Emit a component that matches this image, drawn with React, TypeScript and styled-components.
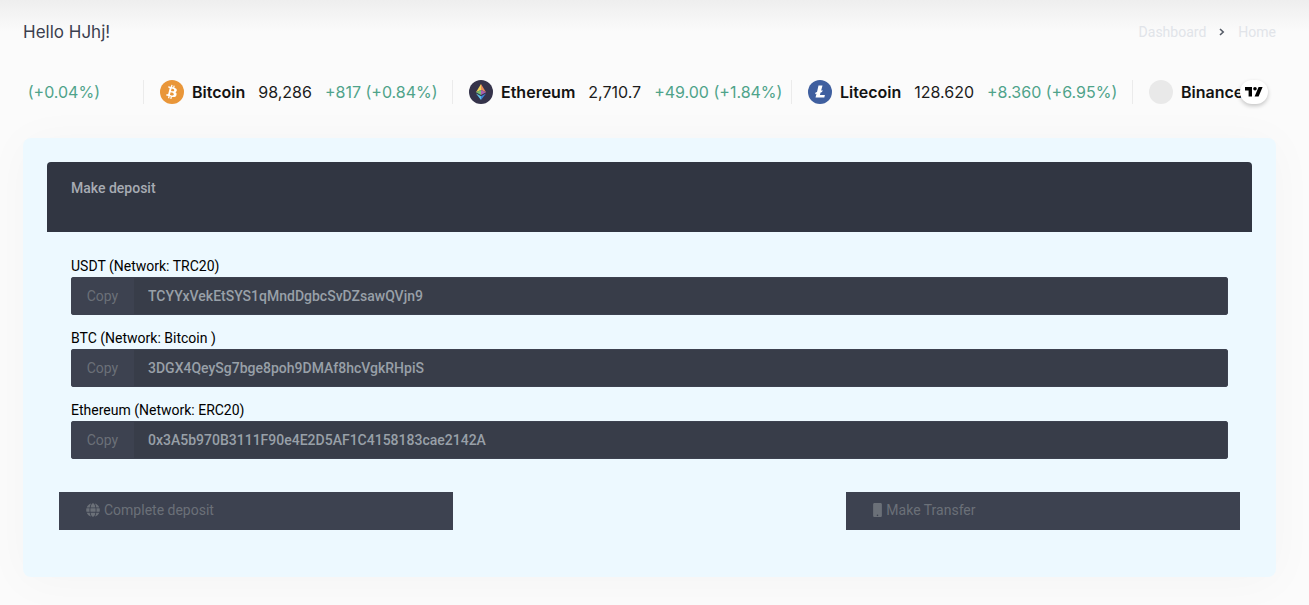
import React, { useId } from "react";
import styled, { createGlobalStyle } from "styled-components";
import { FaGlobe, FaMobile } from "react-icons/fa";

const GlobalStyle = createGlobalStyle`
  *, *::before, *::after { box-sizing: border-box; }
  body {
    margin: 0;
    min-height: 100vh;
    overflow-x: hidden;
    background: linear-gradient(#eee, #fbfbfb 32px) #fbfbfb no-repeat;
    font-family: Roboto, "Liberation Sans", sans-serif;
    font-size: 14px;
    line-height: 21px;
    color: #000;
  }
  button, input { font: inherit; margin: 0; }
`;

const Page = styled.main`
  padding: 20px 33px 28px 23px;
`;

const PageHeader = styled.header`
  display: flex;
  align-items: center;
  justify-content: space-between;
  height: 24px;
`;

const Greeting = styled.h1`
  margin: 0;
  font-family: Inter, sans-serif;
  font-size: 17px;
  line-height: 24px;
  font-weight: 400;
  color: #3b3f4f;
`;

const Breadcrumb = styled.nav`
  display: flex;
  align-items: center;
  gap: 13px;
  color: #555b66;
`;

const Crumb = styled.a`
  color: #e1e4e9;
  text-decoration: none;
`;

const TickerTape = styled.section`
  position: relative;
  margin: 36px 7px 34px 0;
`;

const TickerTrack = styled.div`
  display: flex;
  height: 24px;
  overflow: hidden;
  font-family: Inter, sans-serif;
  font-size: 16px;
  line-height: 24px;
  white-space: nowrap;
`;

const TickerItem = styled.div<{ $width: number; $clipped?: boolean }>`
  display: flex;
  flex: none;
  width: ${(p) => p.$width}px;
  padding-left: ${(p) => (p.$clipped ? 0 : 16)}px;
  padding-right: ${(p) => (p.$clipped ? 43 : 0)}px;
  justify-content: ${(p) => (p.$clipped ? "flex-end" : "flex-start")};
  border-right: 1px solid #ebebeb;
`;

const CoinIcon = styled.svg`
  flex: none;
  width: 24px;
  height: 24px;
  margin-right: 8px;
`;

const CoinName = styled.strong`
  margin-right: 13px;
  font-weight: 600;
  color: #131313;
`;

const CoinPrice = styled.span`
  margin-right: 13px;
  color: #1c1c1c;
`;

const CoinChange = styled.span`
  color: #4fa38a;
`;

const ProviderBadge = styled.a`
  position: absolute;
  top: 0;
  right: 1px;
  display: flex;
  align-items: center;
  justify-content: center;
  width: 28px;
  height: 24px;
  border-radius: 12px;
  background: #fff;
  color: #000;
  box-shadow: 0 2px 4px rgba(0, 0, 0, 0.22);
`;

const Card = styled.section`
  padding: 24px 24px 47px;
  border-radius: 8px;
  background: #edf9ff;
  box-shadow: 0 4px 48px rgba(0, 0, 0, 0.03);
`;

const CardHeader = styled.header`
  height: 70px;
  padding: 16px 24px;
  border-radius: 4px 4px 0 0;
  background: #313642;
`;

const CardTitle = styled.h2`
  margin: 0;
  font-size: 14px;
  line-height: 21px;
  font-weight: 500;
  color: #a7abb3;
`;

const Wallets = styled.div`
  display: grid;
  gap: 13px;
  padding: 24px 24px 33px;
`;

const Field = styled.div`
  display: flex;
  flex-direction: column;
`;

const FieldLabel = styled.label`
  height: 21px;
`;

const AddressGroup = styled.div`
  display: flex;
  height: 38px;
  overflow: hidden;
  border-radius: 3px;
  background: #383d49;
`;

const CopyButton = styled.button`
  flex: none;
  width: 63px;
  padding: 0;
  border: 0;
  background: #3d4250;
  color: #6b7078;
`;

const AddressInput = styled.input`
  flex: 1;
  min-width: 0;
  padding: 0 14px;
  border: 1px solid #3d4250;
  border-left: 0;
  border-radius: 0 3px 3px 0;
  background: #383d49;
  color: #98a0a8;
  font-weight: 500;
  outline: 0;
`;

const Actions = styled.div`
  display: grid;
  grid-template-columns: repeat(3, 1fr);
  padding: 0 12px;
`;

const ActionButton = styled.button<{ $last?: boolean }>`
  display: flex;
  align-items: center;
  gap: 4px;
  grid-column: ${(p) => (p.$last ? 3 : 1)};
  height: 38px;
  padding: 0 27px 2px;
  border: 0;
  background: #3d4250;
  color: #6b7078;
`;

const GlobeIcon = styled(FaGlobe)`
  width: 14px;
  height: 14px;
`;

const PhoneIcon = styled(FaMobile)`
  width: 9px;
  height: 14px;
`;

const Bitcoin = () => (
  <CoinIcon viewBox="0 0 24 24" aria-hidden="true">
    <circle cx="12" cy="12" r="12" fill="#e99639" />
    <path
      fill="#fff"
      d="M16.8 10.5c.2-1.5-.9-2.2-2.5-2.8l.5-2-1.2-.3-.5 2-1-.3.5-2-1.2-.3-.5 2-2.5-.6-.3 1.3.9.2c.5.1.6.4.6.7l-1.4 5.500c-.1.2-.2.4-.6.3l-.9-.2-.6 1.400 2.400.6-.5 2.100 1.200.3.500-2.100 1 .300-.5 2.100 1.200.300.500-2.100c2.200.400 3.800.200 4.500-1.700.5-1.600 0-2.500-1.200-3.100.9-.200 1.500-.700 1.600-1.600zm-3 4.100c-.4 1.600-3 .7-3.900.5l.7-2.800c.9.200 3.600.600 3.200 2.300zm.4-4.100c-.4 1.400-2.500.7-3.200.5l.6-2.500c.7.200 3 .5 2.600 2z"
    />
  </CoinIcon>
);

const Ethereum = () => (
  <CoinIcon viewBox="0 0 24 24" aria-hidden="true">
    <circle cx="12" cy="12" r="12" fill="#35334a" />
    <path fill="#f3d45b" d="M12 4 7 12.300l5-2.300z" />
    <path fill="#e58a5b" d="M12 4v6l5 2.300z" />
    <path fill="#75bf72" d="m7 12.300 5-2.300v5z" />
    <path fill="#a75fb0" d="M17 12.300 12 10v5z" />
    <path fill="#62c6ea" d="m7 13.500 5 2.800V20z" />
    <path fill="#4083d8" d="m17 13.500-5 2.800V20z" />
  </CoinIcon>
);

const Litecoin = () => (
  <CoinIcon viewBox="0 0 24 24" aria-hidden="true">
    <circle cx="12" cy="12" r="12" fill="#3f5f9f" />
    <path
      fill="#fff"
      d="M10.500 5.500h4l-1.400 5.200 1.500-.6-.5 1.800-1.500.6-.7 2.500h5l-.6 2.500H7.500l1-3.800-1.400.6.5-1.800 1.400-.6z"
    />
  </CoinIcon>
);

const Pending = () => (
  <CoinIcon viewBox="0 0 24 24" aria-hidden="true">
    <circle cx="12" cy="12" r="12" fill="#e9e9e9" />
  </CoinIcon>
);

const quotes = [
  { name: "Bitcoin", price: "98,286", change: "+817 (+0.84%)", width: 309, Icon: Bitcoin },
  { name: "Ethereum", price: "2,710.7", change: "+49.00 (+1.84%)", width: 339, Icon: Ethereum },
  { name: "Litecoin", price: "128.620", change: "+8.360 (+6.95%)", width: 341, Icon: Litecoin },
];

const wallets = [
  { label: "USDT (Network: TRC20)", address: "TCYYxVekEtSYS1qMndDgbcSvDZsawQVjn9" },
  { label: "BTC (Network: Bitcoin )", address: "3DGX4QeySg7bge8poh9DMAf8hcVgkRHpiS" },
  { label: "Ethereum (Network: ERC20)", address: "0x3A5b970B3111F90e4E2D5AF1C4158183cae2142A" },
];

function WalletField({ label, address }: { label: string; address: string }) {
  const id = useId();
  return (
    <Field>
      <FieldLabel htmlFor={id}>{label}</FieldLabel>
      <AddressGroup>
        <CopyButton type="button" onClick={() => navigator.clipboard?.writeText(address)}>
          Copy
        </CopyButton>
        <AddressInput id={id} type="text" readOnly value={address} />
      </AddressGroup>
    </Field>
  );
}

export default function App() {
  return (
    <>
      <GlobalStyle />
      <Page>
        <PageHeader>
          <Greeting>Hello HJhj!</Greeting>
          <Breadcrumb aria-label="Breadcrumb">
            <Crumb href="#dashboard">Dashboard</Crumb>
            <svg width="6" height="8" viewBox="0 0 6 8" fill="none" stroke="currentColor" strokeWidth="1.6" aria-hidden="true">
              <path d="m1 1 3.200 3L1 7" />
            </svg>
            <Crumb href="#home">Home</Crumb>
          </Breadcrumb>
        </PageHeader>

        <TickerTape aria-label="Market prices">
          <TickerTrack>
            <TickerItem $width={121} $clipped>
              <CoinChange>0 (+0.04%)</CoinChange>
            </TickerItem>
            {quotes.map(({ name, price, change, width, Icon }) => (
              <TickerItem key={name} $width={width}>
                <Icon />
                <CoinName>{name}</CoinName>
                <CoinPrice>{price}</CoinPrice>
                <CoinChange>{change}</CoinChange>
              </TickerItem>
            ))}
            <TickerItem $width={309}>
              <Pending />
              <CoinName>Binance</CoinName>
            </TickerItem>
          </TickerTrack>
          <ProviderBadge href="#tradingview" aria-label="TradingView">
            <svg width="18" height="10" viewBox="0 0 18 10" fill="currentColor" aria-hidden="true">
              <path d="M0 0h7v9.500H3.600V3.600H0zM13.600 0h4l-4 9.500H9.600z" />
              <circle cx="10" cy="1.800" r="1.800" />
            </svg>
          </ProviderBadge>
        </TickerTape>

        <Card>
          <CardHeader>
            <CardTitle>Make deposit</CardTitle>
          </CardHeader>
          <Wallets>
            {wallets.map((w) => (
              <WalletField key={w.label} {...w} />
            ))}
          </Wallets>
          <Actions>
            <ActionButton type="button">
              <GlobeIcon aria-hidden="true" />
              Complete deposit
            </ActionButton>
            <ActionButton type="button" $last>
              <PhoneIcon aria-hidden="true" />
              Make Transfer
            </ActionButton>
          </Actions>
        </Card>
      </Page>
    </>
  );
}
